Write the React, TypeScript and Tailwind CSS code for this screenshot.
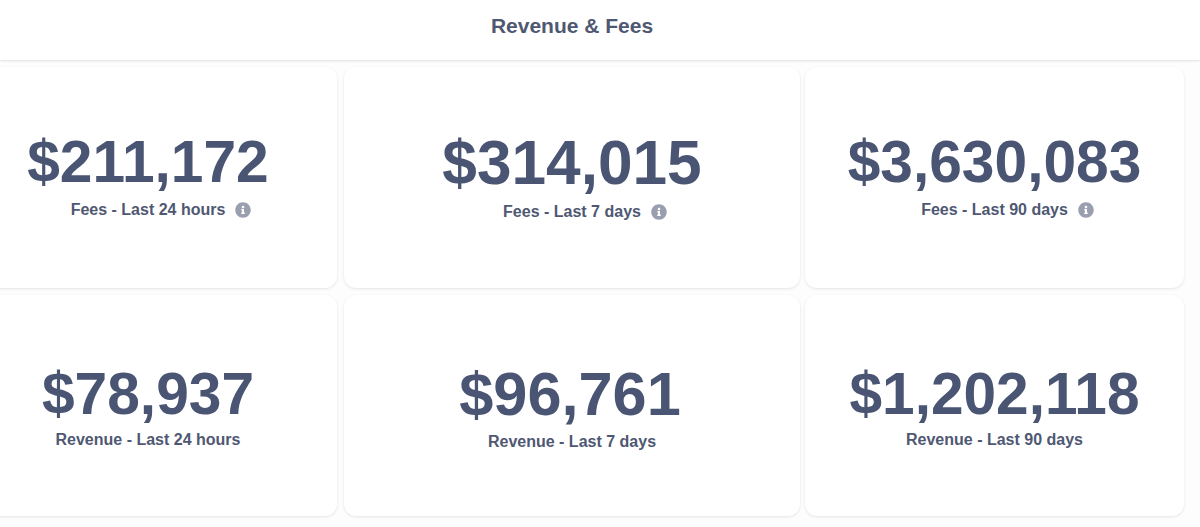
import React from 'react';
import { FaInfoCircle } from 'react-icons/fa';

interface Stat {
  value: string;
  label: string;
  info?: boolean;
  numberClass: string;
  cardClass: string;
}

const stats: Stat[] = [
  { value: '$211,172', label: 'Fees - Last 24 hours', info: true, numberClass: 'text-[58.7px] leading-[74px]', cardClass: 'pb-[9px]' },
  { value: '$314,015', label: 'Fees - Last 7 days', info: true, numberClass: 'text-[62.2px] leading-[76px]', cardClass: 'ml-px -mr-px pb-[7px]' },
  { value: '$3,630,083', label: 'Fees - Last 90 days', info: true, numberClass: 'text-[58.7px] leading-[74px]', cardClass: 'pb-[9px]' },
  { value: '$78,937', label: 'Revenue - Last 24 hours', numberClass: 'text-[58.7px] leading-[70px]', cardClass: 'pb-px' },
  { value: '$96,761', label: 'Revenue - Last 7 days', numberClass: 'text-[61.3px] leading-[74px] pr-1', cardClass: 'ml-px -mr-px pb-px' },
  { value: '$1,202,118', label: 'Revenue - Last 90 days', numberClass: 'text-[58.6px] leading-[70px]', cardClass: 'pb-px' },
];

function StatCard({ value, label, info, numberClass, cardClass }: Stat) {
  return (
    <div className={`flex h-[221px] flex-col items-center justify-center rounded-xl bg-white shadow-[0_1px_3px_rgba(0,0,0,0.1)] ${cardClass}`}>
      <div className={`${numberClass} font-bold text-[#4a5573]`}>{value}</div>
      <div className="relative text-base font-bold leading-[22px] text-[#4f5872]">
        <span>{label}</span>
        {info && <FaInfoCircle className="absolute -right-[26px] top-[3px] h-4 w-4 text-[#9a9fb0]" />}
      </div>
    </div>
  );
}

export default function App() {
  return (
    <div className="h-[527px] w-[1200px] overflow-hidden bg-[#fdfdfd] font-['Liberation_Sans',Arial,sans-serif]">
      <header className="flex h-[60px] items-center justify-center bg-white pr-[56px] pb-[9px] shadow-[0_1px_2px_rgba(0,0,0,0.12)]">
        <h1 className="text-[21px] font-bold text-[#4f5872]">Revenue &amp; Fees</h1>
      </header>
      <div className="-ml-[41px] mt-[7px] grid w-[1225px] grid-cols-[378px_456px_379px] gap-x-[6px] gap-y-[7px]">
        {stats.map((s) => (
          <StatCard key={s.label} {...s} />
        ))}
      </div>
    </div>
  );
}
